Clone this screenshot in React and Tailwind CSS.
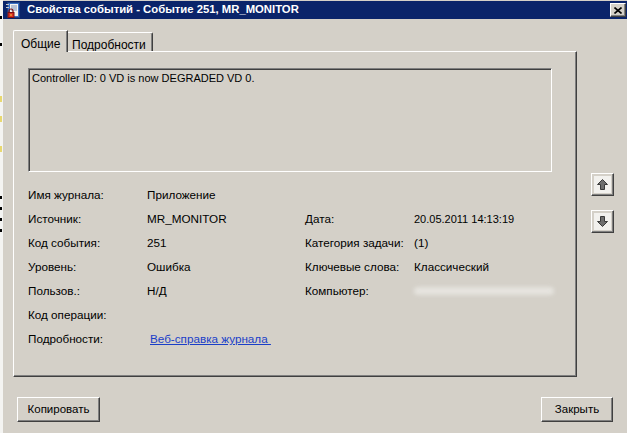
import React from 'react';

const font = "font-['Liberation_Sans',Arial,sans-serif]";

// Иконка журнала событий в заголовке
const LogIcon = () => (
  <svg width="16" height="16" viewBox="0 0 16 16">
    <rect x="2.5" y="0.5" width="12" height="15" fill="#3a6fc4" stroke="#1c3f80" />
    <rect x="5" y="2" width="8" height="12" fill="#f4f4f0" />
    <line x1="6" y1="4" x2="12" y2="4" stroke="#7a8fb8" />
    <line x1="6" y1="6" x2="12" y2="6" stroke="#7a8fb8" />
    <line x1="6" y1="8" x2="12" y2="8" stroke="#7a8fb8" />
    <rect x="1" y="2" width="3" height="1" fill="#c8c8c8" />
    <rect x="1" y="5" width="3" height="1" fill="#c8c8c8" />
    <path d="M4 10.5 v-1.5 a2 2 0 0 1 4 0 v1.5" fill="none" stroke="#7a1010" strokeWidth="1.2" />
    <rect x="3" y="10.5" width="6" height="5" fill="#d83020" stroke="#7a1010" />
    <rect x="5.5" y="12" width="1" height="2" fill="#f6d040" />
  </svg>
);

const ArrowButton = ({ down }) => (
  <div className="w-[23px] h-[23px] border-t border-l border-white border-r border-b border-r-[#404040] border-b-[#404040] shadow-[inset_-1px_-1px_0_#808080] flex items-center justify-center">
    <div className="w-[17px] h-[17px] bg-[#f2f1ee] flex items-center justify-center">
      <svg width="13" height="13" viewBox="0 0 13 13">
        <path
          d={down ? 'M4.5 1.5 h4 v5 h3 l-5 5 l-5 -5 h3 z' : 'M6.5 1.5 l5 5 h-3 v5 h-4 v-5 h-3 z'}
          fill="#6e6e6e"
          stroke="#3a3a3a"
          strokeLinejoin="round"
        />
      </svg>
    </div>
  </div>
);

const WinButton = ({ children, width }) => (
  <button
    className={`${width} h-[25px] bg-[#d4d0c8] border-t border-l border-white border-r border-b border-r-[#404040] border-b-[#404040] shadow-[inset_-1px_-1px_0_#808080] text-[11.5px] text-black flex items-center justify-center`}
  >
    {children}
  </button>
);

const rows = [
  ['Имя журнала:', 'Приложение', '', ''],
  ['Источник:', 'MR_MONITOR', 'Дата:', '20.05.2011 14:13:19'],
  ['Код события:', '251', 'Категория задачи:', '(1)'],
  ['Уровень:', 'Ошибка', 'Ключевые слова:', 'Классический'],
  ['Пользов.:', 'Н/Д', 'Компьютер:', null],
  ['Код операции:', '', '', ''],
];

const App = () => {
  return (
    <div className={`w-[627px] h-[433px] bg-[#d4d0c8] flex overflow-hidden ${font} text-black`}>
      {/* окно позади */}
      <div className="w-[3px] h-full bg-[#f4f4f2] flex flex-col">
        <div className="h-[16px]" />
        <div className="w-[2px] h-[3px] bg-black" />
        <div className="h-[24px]" />
        <div className="w-[2px] h-[3px] bg-black" />
        <div className="h-[50px]" />
        <div className="w-[2px] h-[6px] bg-[#e8d870]" />
        <div className="h-[14px]" />
        <div className="w-[2px] h-[6px] bg-[#e8d870]" />
        <div className="h-[24px]" />
        <div className="w-[2px] h-[6px] bg-[#e8d870]" />
        <div className="h-[44px]" />
        <div className="w-[2px] h-[3px] bg-black" />
        <div className="h-[8px]" />
        <div className="w-[2px] h-[3px] bg-black" />
        <div className="h-[8px]" />
        <div className="w-[2px] h-[3px] bg-black" />
        <div className="h-[8px]" />
        <div className="w-[2px] h-[3px] bg-black" />
      </div>

      <div className="flex-1 flex flex-col">
        {/* Заголовок */}
        <div className="h-[18px] mt-[1px] bg-[#0a246a] flex items-center">
          <div className="ml-[2px] mr-[6px]">
            <LogIcon />
          </div>
          <span className="text-white font-bold text-[11.3px] leading-none">
            Свойства событий - Событие 251, MR_MONITOR
          </span>
          <div className="ml-auto mr-[1px] w-[16px] h-[14px] bg-[#d4d0c8] border-t border-l border-white border-r border-b border-r-[#404040] border-b-[#404040] shadow-[inset_-1px_-1px_0_#808080] flex items-center justify-center">
            <svg width="8" height="7" viewBox="0 0 8 7">
              <path d="M0.5 0.5 L7.5 6.5 M7.5 0.5 L0.5 6.5" stroke="#000" strokeWidth="1.6" />
            </svg>
          </div>
        </div>

        {/* Содержимое */}
        <div className="flex pt-[11px] pl-[10px]">
          <div className="w-[564px] flex flex-col">
            {/* Вкладки */}
            <div className="h-[22px] flex items-end">
              <div className="relative z-10 h-[22px] w-[55px] bg-[#d4d0c8] border-t border-l border-white border-r border-r-[#404040] shadow-[inset_-1px_0_0_#808080] rounded-tl-[2px] flex items-start pt-[4px] pl-[7px] text-[12px]">
                Общие
              </div>
              <div className="h-[20px] w-[85px] border-t border-white border-r border-r-[#404040] shadow-[inset_-1px_0_0_#808080] rounded-tr-[2px] flex items-start pt-[3px] pl-[4px] text-[12px]">
                Подробности
              </div>
            </div>

            {/* Панель */}
            <div className="-mt-px h-[326px] border-t border-l border-white border-r border-b border-r-[#404040] border-b-[#404040] shadow-[inset_-1px_-1px_0_#808080] pl-[14px] pt-[16px]">
              <div className="w-[524px] h-[104px] border-t border-l border-[#808080] border-r border-b border-r-white border-b-white shadow-[inset_1px_1px_0_#404040] pl-[3px] pt-[2px] text-[11px] leading-[15px]">
                Controller ID: 0 VD is now DEGRADED VD 0.
              </div>

              <div className="mt-[11px] grid grid-cols-[119px_158px_109px_1fr] text-[11.7px]">
                {rows.map(([l1, v1, l2, v2], i) => (
                  <React.Fragment key={i}>
                    <div className="h-[24px] flex items-center">{l1}</div>
                    <div className="h-[24px] flex items-center">{v1}</div>
                    <div className="h-[24px] flex items-center">{l2}</div>
                    <div className="h-[24px] flex items-center">
                      {v2 === null ? (
                        <div className="w-[140px] h-[8px] bg-[#e6e4df] blur-[2px] rounded-full" />
                      ) : i === 1 ? (
                        <span className="text-[11px]">{v2}</span>
                      ) : (
                        v2
                      )}
                    </div>
                  </React.Fragment>
                ))}
                <div className="h-[24px] flex items-center">Подробности:</div>
                <div className="h-[24px] flex items-center col-span-3">
                  <span className="ml-[3px] text-[#1a3fc8] underline">Веб-справка журнала&nbsp;</span>
                </div>
              </div>
            </div>
          </div>

          {/* Кнопки вверх/вниз */}
          <div className="ml-[14px] pt-[143px] flex flex-col gap-[14px]">
            <ArrowButton />
            <ArrowButton down />
          </div>
        </div>

        {/* Нижние кнопки */}
        <div className="mt-[20px] px-[14px] flex justify-between">
          <WinButton width="w-[83px]">Копировать</WinButton>
          <WinButton width="w-[72px]">Закрыть</WinButton>
        </div>
      </div>
    </div>
  );
};

export default App;
